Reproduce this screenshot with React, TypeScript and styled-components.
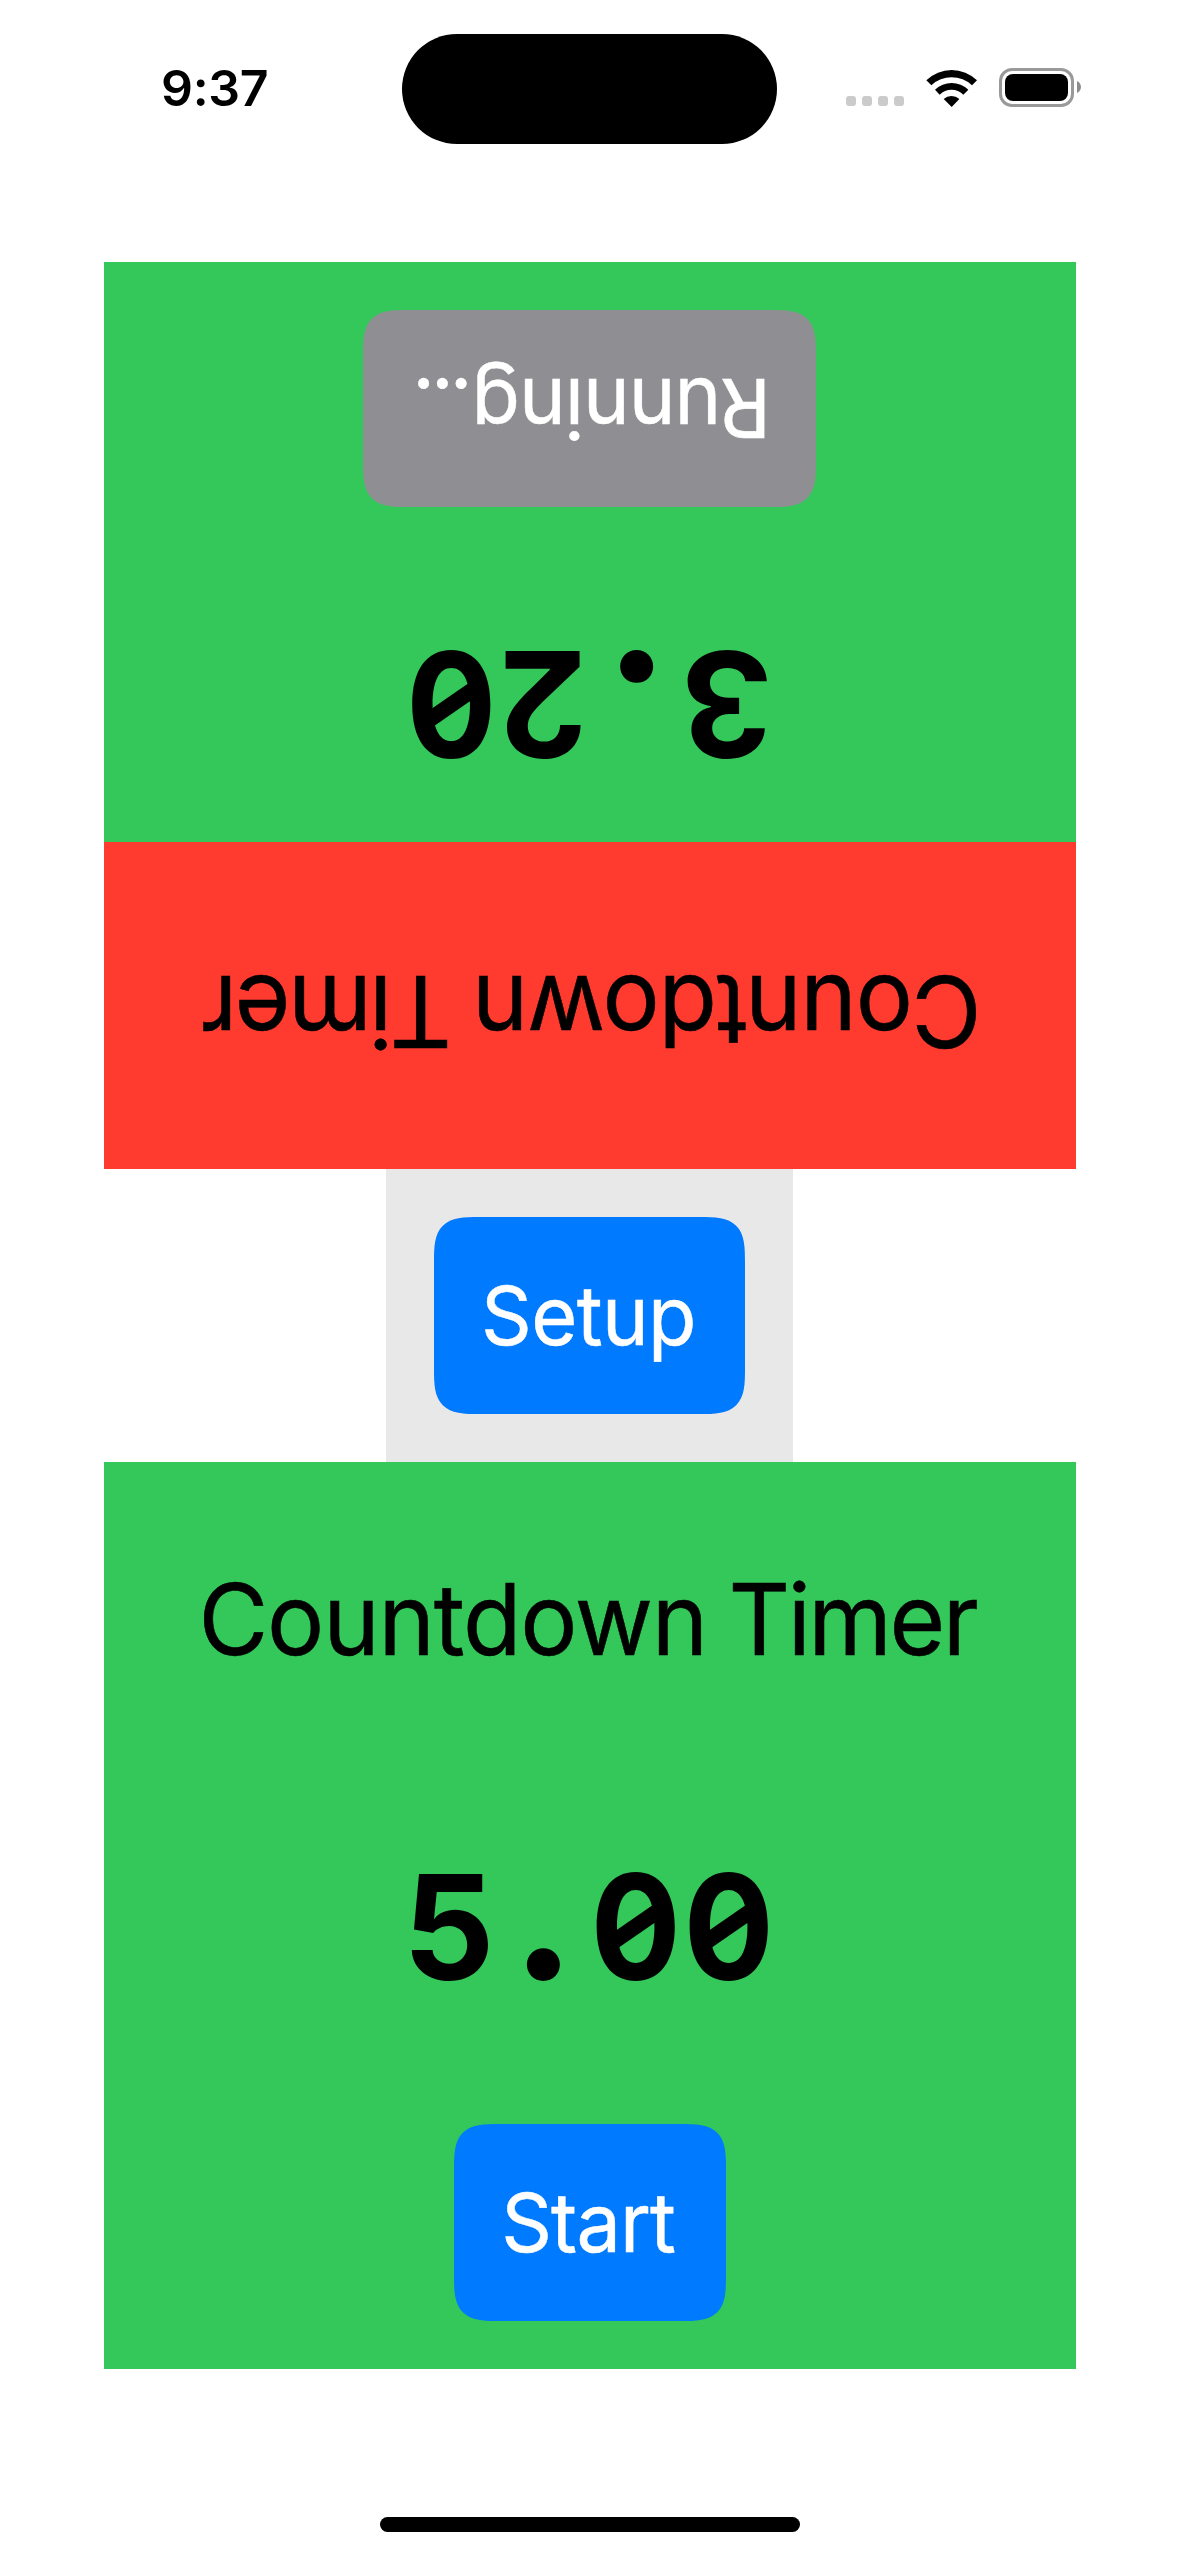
import React from "react";
import styled, { createGlobalStyle } from "styled-components";

const colors = {
  green: "#34c759",
  red: "#ff3b30",
  blue: "#007aff",
  gray: "#8e8e93",
  tray: "#e8e8e9",
};

const GlobalStyle = createGlobalStyle`
  * { box-sizing: border-box; }
  body {
    margin: 0;
    background: #fff;
    color: #000;
    font-family: Inter, "Liberation Sans", sans-serif;
  }
`;

const Screen = styled.div`
  width: 1179px;
  height: 2556px;
  display: flex;
  flex-direction: column;
  align-items: center;
  overflow: hidden;
`;

/* ---------- status bar ---------- */

const StatusBar = styled.header`
  width: 100%;
  height: 262px;
  padding-top: 33.5px;
  display: grid;
  grid-template-columns: 402px 375px 402px;
  grid-template-rows: 110.5px;
`;

const Clock = styled.div`
  height: 109px;
  padding-left: 161px;
  font-size: 50px;
  font-weight: 600;
  line-height: 109px;
  letter-spacing: -0.3px;
`;

const Island = styled.div`
  border-radius: 56px;
  background: #000;
`;

const StatusIcons = styled.div`
  height: 108px;
  padding-right: 98px;
  display: flex;
  align-items: center;
  justify-content: flex-end;
`;

const SignalDots = styled.div`
  display: flex;
  gap: 6px;
  margin: 27px 22px 0 0;
`;

const SignalDot = styled.span`
  width: 10px;
  height: 10px;
  border-radius: 3px;
  background: #cbcbcb;
`;

const WifiGlyph = styled.svg`
  width: 51px;
  height: 38px;
  margin-right: 22px;
`;

const BatteryGlyph = styled.svg`
  width: 82px;
  height: 39px;
`;

/* ---------- timer panels ---------- */

const Panel = styled.section<{ $flipped?: boolean }>`
  width: 972px;
  height: 907px;
  margin-left: 1px;
  flex: none;
  display: flex;
  flex-direction: column;
  background: ${colors.green};
  transform: ${(p) => (p.$flipped ? "rotate(180deg)" : "none")};
`;

const TitleArea = styled.div<{ $color: string }>`
  height: 327px;
  padding-bottom: 13px;
  display: flex;
  align-items: center;
  justify-content: center;
  background: ${(p) => p.$color};
`;

const Title = styled.h1`
  margin: 0;
  font-size: 99px;
  font-weight: 400;
  -webkit-text-stroke: 0.5px currentColor;
  word-spacing: -5.5px;
  white-space: nowrap;
  transform: translateX(-2.7px) scaleX(0.965);
`;

const Tracked = styled.span<{ $tracking: number }>`
  letter-spacing: ${(p) => p.$tracking}px;
`;

const PanelBody = styled.div`
  flex: 1;
  padding-bottom: 48px;
  display: flex;
  flex-direction: column;
  align-items: center;
  justify-content: space-between;
`;

const Readout = styled.div`
  height: 275px;
  display: flex;
  align-items: center;
  font-size: 145.8px;
  font-weight: 700;
`;

const Cell = styled.span`
  width: 93px;
  display: flex;
  justify-content: center;
`;

const Digit = styled.span<{ $shift: number }>`
  display: block;
  transform: translateX(${(p) => p.$shift}px) scaleX(0.985);
`;

const Zero = styled.span`
  position: relative;
  display: block;
  transform: translateX(-0.5px) scaleX(0.92);

  &::after {
    content: "";
    position: absolute;
    left: calc(50% - 22px);
    top: calc(50% - 9.5px);
    width: 44px;
    height: 19px;
    background: currentColor;
    transform: skewY(-32.5deg);
  }
`;

const Point = styled.span`
  display: block;
  transform: translateY(-1px) scale(1.34);
  transform-origin: 50% 80.5%;
`;

/* ---------- buttons ---------- */

const Button = styled.button<{ $width: number; $color: string }>`
  width: ${(p) => p.$width}px;
  height: 197px;
  padding: 0;
  border: 0;
  border-radius: 46px;
  corner-shape: superellipse(1.7);
  display: flex;
  align-items: center;
  justify-content: center;
  background: ${(p) => p.$color};
  color: #fff;
  font: 400 81.6px Inter, "Liberation Sans", sans-serif;
  -webkit-text-stroke: 0.5px currentColor;
`;

const ButtonLabel = styled.span<{ $tracking: number; $shift: number }>`
  letter-spacing: ${(p) => p.$tracking}px;
  white-space: nowrap;
  transform: translateX(${(p) => p.$shift}px) scaleX(0.97);
`;

const SetupTray = styled.div`
  width: 407px;
  height: 293px;
  flex: none;
  display: flex;
  align-items: center;
  justify-content: center;
  background: ${colors.tray};
`;

const HomeIndicator = styled.div`
  width: 420px;
  height: 15px;
  margin: auto 0 24px 1px;
  border-radius: 8px;
  background: #000;
`;

function Wifi() {
  return (
    <WifiGlyph viewBox="678 145 153 114" aria-label="Wi-Fi">
      <path d="M679 179 A109 109 0 0 1 831 179 L816 194 A89 89 0 0 0 694 194Z" />
      <path d="M705 207 A72 72 0 0 1 805 207 L790 222 A51 51 0 0 0 719 222Z" />
      <path d="M731 235 A35 35 0 0 1 778 235 L755 259Z" />
    </WifiGlyph>
  );
}

function Battery() {
  return (
    <BatteryGlyph viewBox="0 0 82 39" aria-label="Battery">
      <rect x="1.5" y="1.5" width="72" height="36" rx="11.5" fill="none" stroke="#999" strokeWidth="3" />
      <rect x="6" y="6" width="63" height="27" rx="8" />
      <path d="M78 13 C80.5 14.2 82 16.5 82 19 C82 21.5 80.5 23.8 78 25Z" fill="#8c8c8c" />
    </BatteryGlyph>
  );
}

/* Optical centring of each numeral inside its fixed-width cell. */
const digitShift: Record<string, number> = { "5": -2, "3": 2.5 };

function TimeReadout({ value }: { value: string }) {
  return (
    <Readout>
      {value.split("").map((ch, i) => (
        <Cell key={i}>
          {ch === "0" ? (
            <Zero>{ch}</Zero>
          ) : ch === "." ? (
            <Point>{ch}</Point>
          ) : (
            <Digit $shift={digitShift[ch] ?? 0}>{ch}</Digit>
          )}
        </Cell>
      ))}
    </Readout>
  );
}

function PanelTitle() {
  return (
    <Title>
      <Tracked $tracking={-1.2}>Countdown</Tracked> <Tracked $tracking={-2.6}>Timer</Tracked>
    </Title>
  );
}

export default function App() {
  return (
    <Screen>
      <GlobalStyle />
      <StatusBar>
        <Clock>9:37</Clock>
        <Island />
        <StatusIcons>
          <SignalDots>
            {[0, 1, 2, 3].map((n) => (
              <SignalDot key={n} />
            ))}
          </SignalDots>
          <Wifi />
          <Battery />
        </StatusIcons>
      </StatusBar>

      <Panel $flipped>
        <TitleArea $color={colors.red}>
          <PanelTitle />
        </TitleArea>
        <PanelBody>
          <TimeReadout value="3.20" />
          <Button $width={453} $color={colors.gray}>
            <ButtonLabel $tracking={-1.05} $shift={-3.6}>
              Running<Tracked $tracking={-4.2}>...</Tracked>
            </ButtonLabel>
          </Button>
        </PanelBody>
      </Panel>

      <SetupTray>
        <Button $width={311} $color={colors.blue}>
          <ButtonLabel $tracking={-0.7} $shift={-1.2}>Setup</ButtonLabel>
        </Button>
      </SetupTray>

      <Panel>
        <TitleArea $color={colors.green}>
          <PanelTitle />
        </TitleArea>
        <PanelBody>
          <TimeReadout value="5.00" />
          <Button $width={272} $color={colors.blue}>
            <ButtonLabel $tracking={-1} $shift={-2.4}>Start</ButtonLabel>
          </Button>
        </PanelBody>
      </Panel>

      <HomeIndicator />
    </Screen>
  );
}
